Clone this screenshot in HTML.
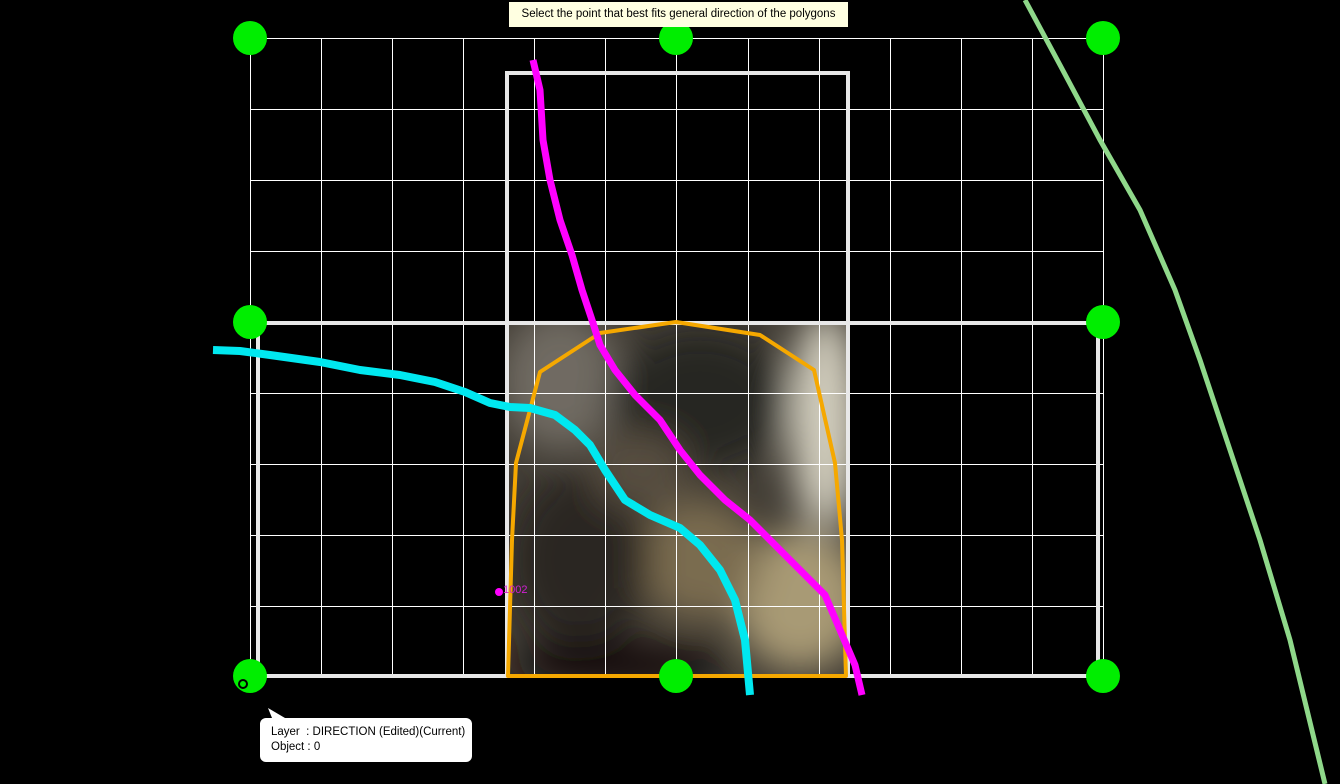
<!DOCTYPE html>
<html><head><meta charset="utf-8"><style>
html,body{margin:0;padding:0;background:#000;width:1340px;height:784px;overflow:hidden;font-family:"Liberation Sans",sans-serif}
.tip{position:absolute;left:509px;top:2px;width:339px;height:25px;background:#ffffe1;font-size:11.5px;line-height:25px;text-align:center;color:#000;white-space:nowrap}
.pop{position:absolute;left:260px;top:718px;width:212px;height:44px;background:#fff;border-radius:6px;font-size:11.5px;color:#000;box-sizing:border-box;padding:7px 11px;line-height:15px;white-space:nowrap}
</style></head><body>
<svg width="1340" height="784" style="position:absolute;left:0;top:0">
<defs>
<filter id="b" x="-20%" y="-20%" width="140%" height="140%"><feGaussianBlur stdDeviation="18"/></filter>
<clipPath id="c"><rect x="508" y="324" width="338" height="352"/></clipPath>
</defs>
<g clip-path="url(#c)">
<rect x="508" y="324" width="338" height="352" fill="#423d35"/>
<g filter="url(#b)">
<ellipse cx="560" cy="380" rx="60" ry="70" fill="#6f6a62"/>
<ellipse cx="700" cy="400" rx="90" ry="70" fill="#262624"/>
<ellipse cx="825" cy="420" rx="35" ry="110" fill="#d0ccbc"/>
<ellipse cx="800" cy="600" rx="65" ry="70" fill="#a89a74"/>
<ellipse cx="700" cy="560" rx="60" ry="60" fill="#7a6c50"/>
<ellipse cx="580" cy="560" rx="70" ry="90" fill="#2a2724"/>
<ellipse cx="620" cy="665" rx="110" ry="25" fill="#121110"/>
<ellipse cx="640" cy="470" rx="50" ry="40" fill="#574e40"/>
</g>
</g>
<g stroke="#fff" stroke-width="1">
<path d="M250.5 38V676M321.5 38V676M392.5 38V676M463.5 38V676M534.5 38V676M605.5 38V676M676.5 38V676M748.5 38V676M819.5 38V676M890.5 38V676M961.5 38V676M1032.5 38V676M1103.5 38V676"/>
<path d="M250 38.5H1103M250 109.5H1103M250 180.5H1103M250 251.5H1103M250 322.5H1103M250 393.5H1103M250 464.5H1103M250 535.5H1103M250 606.5H1103M250 676.5H1103"/>
</g>
<g fill="none" stroke="#e8e8e8" stroke-width="4">
<rect x="507" y="73" width="341" height="603"/>
<rect x="258" y="323" width="840" height="353"/>
</g>
<path d="M508 676L512 540L516 463L540 372L600 333L676 322L760 335L814 370L835 463L842 540L846 676Z" fill="none" stroke="#f5a800" stroke-width="4" stroke-linejoin="round"/>
<path d="M1025 0L1060 65L1100 140L1140 210L1175 290L1200 360L1230 450L1260 540L1290 640L1325 784" fill="none" stroke="#8fd88a" stroke-width="5"/>
<g fill="#00ee00">
<circle cx="250" cy="38" r="17"/><circle cx="676" cy="38" r="17"/><circle cx="1103" cy="38" r="17"/>
<circle cx="250" cy="322" r="17"/><circle cx="1103" cy="322" r="17"/>
<circle cx="250" cy="676" r="17"/><circle cx="676" cy="676" r="17"/><circle cx="1103" cy="676" r="17"/>
</g>
<path d="M213 350L240 351L270 355L320 362L360 370L400 375L435 382L465 392L490 403L510 407L530 408L555 415L575 430L590 445L605 470L625 500L650 515L680 528L700 545L720 570L735 600L745 640L750 695" fill="none" stroke="#00e8f0" stroke-width="8" stroke-linejoin="round"/>
<path d="M533 60L540 90L543 140L550 180L560 220L572 255L582 290L592 320L600 345L615 370L635 395L660 420L680 450L700 475L725 500L750 520L775 545L800 570L825 595L840 630L855 665L862 695" fill="none" stroke="#ff00ff" stroke-width="7" stroke-linejoin="round"/>
<circle cx="499" cy="592" r="4" fill="#ff00ff"/>
<text x="503" y="593" font-size="11" fill="#d020d0" font-family="Liberation Sans,sans-serif">1002</text>
<circle cx="243" cy="684" r="4" fill="none" stroke="#000" stroke-width="2"/>
<path d="M268 708L285 718L272 718Z" fill="#fff"/>
</svg>
<div class="tip">Select the point that best fits general direction of the polygons</div>
<div class="pop">Layer &nbsp;: DIRECTION (Edited)(Current)<br>Object : 0</div>
</body></html>
